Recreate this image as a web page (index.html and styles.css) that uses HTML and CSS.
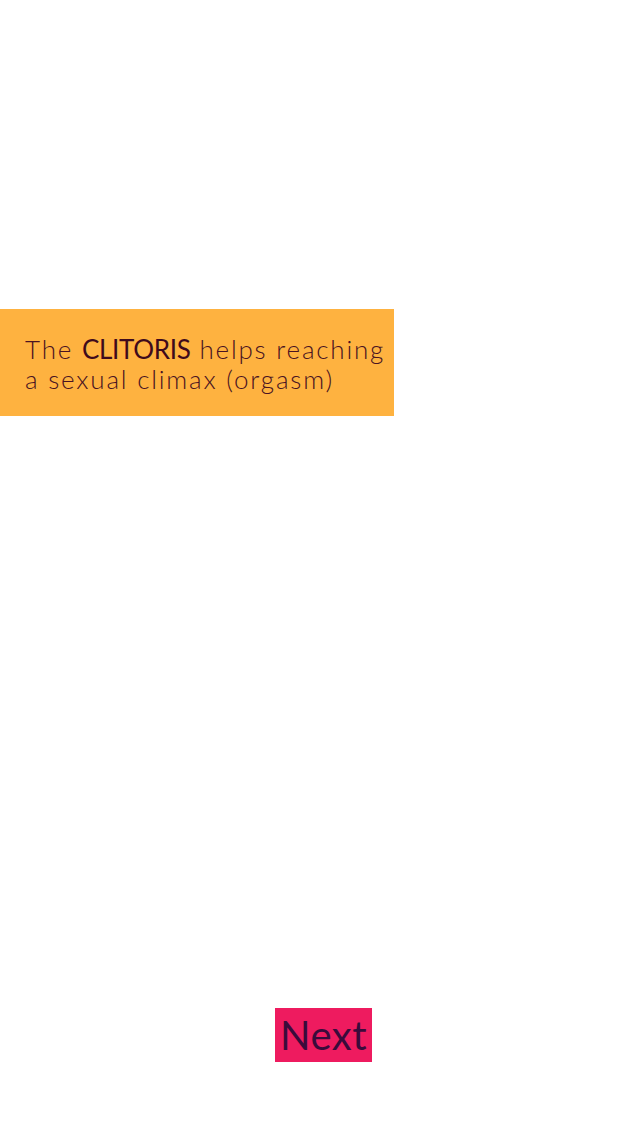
FILE: index.html
```html
<!DOCTYPE html>
<html>
<head>
<meta charset="utf-8">
<link rel="stylesheet" href="styles.css">
</head>
<body>
<div class="page">
  <div class="card">
    <p class="fact">The <strong class="hl">CLITORIS</strong> helps reaching<br>a sexual climax (orgasm)</p>
  </div>
  <div class="actions">
    <button class="next">Next</button>
  </div>
</div>
</body>
</html>
```
FILE: styles.css
```css
html, body {
  margin: 0;
  padding: 0;
  background: #ffffff;
}
.page {
  width: 640px;
  height: 1136px;
  display: flex;
  flex-direction: column;
  padding-top: 309px;
  box-sizing: border-box;
}
.card {
  width: 394px;
  height: 107px;
  background: #feb240;
  box-sizing: border-box;
  padding: 25px 0 0 25px;
}
.fact {
  margin: 0;
  font-family: Lato, "Liberation Sans", sans-serif;
  font-weight: 300;
  font-size: 26px;
  line-height: 30px;
  letter-spacing: 1.8px;
  color: #4a1322;
  white-space: nowrap;
}
.hl {
  font-weight: 400;
  color: #3f0a1c;
  letter-spacing: -0.3px;
}
.actions {
  margin-top: 592px;
  padding-left: 275px;
}
.next {
  width: 97px;
  height: 54px;
  border: 0;
  padding: 0;
  background: #ee1b5f;
  color: #3a0b3b;
  font-family: Lato, "Liberation Sans", sans-serif;
  font-weight: 400;
  font-size: 40px;
  letter-spacing: 0.5px;
  line-height: 52px;
}
```
